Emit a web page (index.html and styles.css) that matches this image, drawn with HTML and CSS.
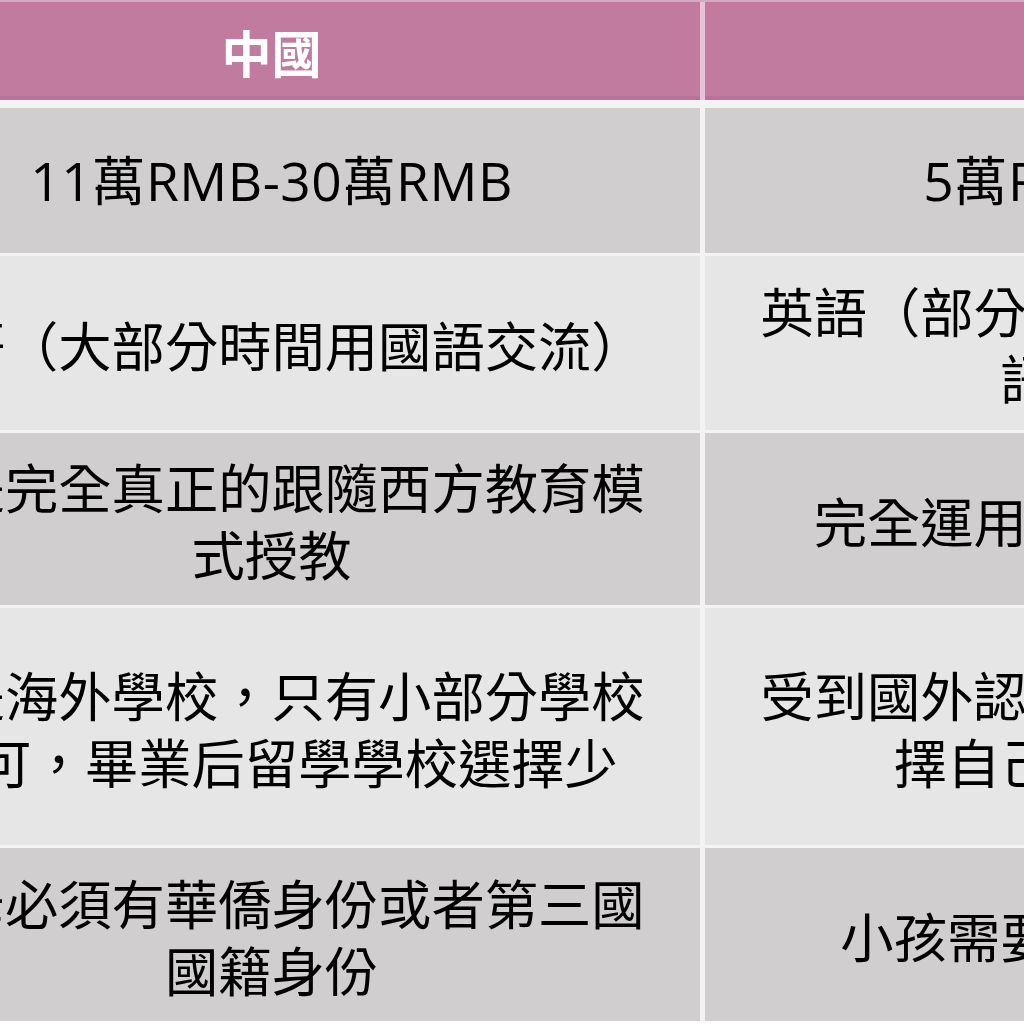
FILE: index.html
```html
<!DOCTYPE html>
<html lang="zh-Hant">
<head>
<meta charset="utf-8">
<title>學校對比</title>
<link rel="stylesheet" href="styles.css">
</head>
<body>
<div class="table">
  <div class="row head-row">
    <div class="cell head">中國</div>
    <div class="cell head">馬來西亞</div>
  </div>
  <div class="row r1">
    <div class="cell dark latin">11萬RMB-30萬RMB</div>
    <div class="cell dark latin">5萬RMB-8萬RMB</div>
  </div>
  <div class="row r2">
    <div class="cell light">雙語（大部分時間用國語交流）</div>
    <div class="cell light">英語（部分學校教授中文和馬來語等課程）</div>
  </div>
  <div class="row r3">
    <div class="cell dark">不是完全真正的跟隨西方教育模式授教</div>
    <div class="cell dark">完全運用西方教育模式授教</div>
  </div>
  <div class="row r4">
    <div class="cell light">不是海外學校，只有小部分學校認可，畢業后留學學校選擇少</div>
    <div class="cell light">受到國外認可，畢業后可自由選擇自己心儀大學就讀</div>
  </div>
  <div class="row r5">
    <div class="cell dark">父母必須有華僑身份或者第三國國籍身份</div>
    <div class="cell dark">小孩需要辦理留學生簽證</div>
  </div>
</div>
</body>
</html>
```

FILE: styles.css
```css
html, body {
  margin: 0;
  padding: 0;
  background: #ffffff;
  overflow: hidden;
}

body {
  width: 1024px;
  height: 1024px;
  font-family: "Noto Sans CJK TC", "Noto Sans", sans-serif;
  color: #000000;
}

.table {
  margin-left: -157px;
  width: 1719px;
  border-top: 2px solid #d6aac2;
  background: #f3f3f3;
  display: flex;
  flex-direction: column;
  gap: 3px;
}

.row {
  display: grid;
  grid-template-columns: 857px 857px;
  column-gap: 5px;
}

.head-row {
  background: #e6c3d6;
  margin-bottom: 5px;
}

.cell {
  display: flex;
  align-items: center;
  justify-content: center;
  text-align: center;
  padding: 0 40px;
  font-size: 53.3px;
  line-height: 67px;
}

.latin {
  font-family: "Open Sans", "Noto Sans CJK TC", sans-serif;
  letter-spacing: 0.5px;
}

.head {
  height: 98px;
  background: #c17b9f;
  box-shadow: inset 0 -4px 0 #b9739a;
  color: #ffffff;
  font-weight: 700;
  font-size: 50px;
  line-height: 60px;
}

.dark {
  background: #d0cece;
}

.light {
  background: #e7e6e6;
}

.r1 .cell { height: 145px; }
.r2 .cell { height: 174px; }
.r3 .cell { height: 172px; }
.r4 .cell { height: 237px; }
.r5 .cell { height: 173px; }
```
